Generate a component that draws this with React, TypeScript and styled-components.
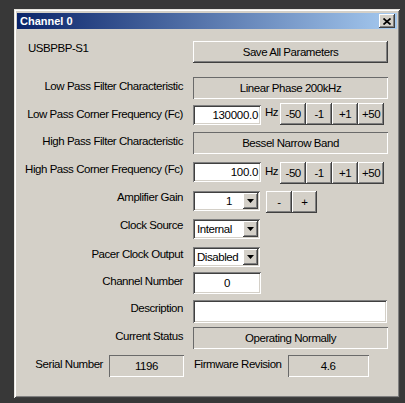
import React from "react";
import styled, { createGlobalStyle } from "styled-components";

const FACE = "#d4d0c8";

const Global = createGlobalStyle`
  html, body { margin: 0; padding: 0; background: #383838; }
  body {
    font-family: "Liberation Sans", Arial, sans-serif;
    font-size: 11.5px;
    letter-spacing: -0.45px;
    color: #000;
  }
  * { box-sizing: border-box; }
`;

const Window = styled.div`
  margin: 9px 0 0 14px;
  width: 386px;
  height: 389px;
  background: ${FACE};
  padding: 4px 3px 3px 3px;
  box-shadow: inset 1px 1px #e8e6e0, inset -1px -1px #404040,
    inset 2px 2px #ffffff, inset -2px -2px #808080;
  display: flex;
  flex-direction: column;
`;

const TitleBar = styled.div`
  height: 16px;
  background: linear-gradient(to right, #0a246a, #a6caf0);
  display: flex;
  align-items: center;
  justify-content: space-between;
  padding: 0 2px 0 3px;
`;

const Title = styled.span`
  color: #fff;
  font-weight: bold;
  font-size: 11px;
  letter-spacing: 0;
`;

const CloseBtn = styled.div`
  width: 16px;
  height: 14px;
  background: ${FACE};
  box-shadow: inset -1px -1px #404040, inset 1px 1px #ffffff,
    inset -2px -2px #808080;
  display: flex;
  align-items: center;
  justify-content: center;
`;

const Body = styled.div`
  display: flex;
  flex-direction: column;
`;

const Row = styled.div<{ $h: number; $mt: number }>`
  display: flex;
  gap: 10px;
  height: ${(p) => p.$h}px;
  margin-top: ${(p) => p.$mt}px;
`;

const Label = styled.div<{ $lt?: number; $left?: boolean }>`
  width: 166px;
  flex: none;
  text-align: ${(p) => (p.$left ? "left" : "right")};
  padding-left: ${(p) => (p.$left ? 11 : 0)}px;
  padding-top: ${(p) => p.$lt ?? 0}px;
  line-height: 13px;
  white-space: nowrap;
`;

const Controls = styled.div`
  display: flex;
  align-items: flex-start;
`;

const PushButton = styled.div<{ $w: number; $h?: number; $ml?: number }>`
  width: ${(p) => p.$w}px;
  height: ${(p) => p.$h ?? 22}px;
  margin-left: ${(p) => p.$ml ?? 0}px;
  flex: none;
  background: ${FACE};
  box-shadow: inset -1px -1px #404040, inset 1px 1px #ffffff,
    inset -2px -2px #808080;
  display: flex;
  align-items: center;
  justify-content: center;
  line-height: 13px;
  white-space: nowrap;
`;

const StaticField = styled.div<{ $w: number }>`
  width: ${(p) => p.$w}px;
  height: 22px;
  flex: none;
  background: ${FACE};
  box-shadow: inset 1px 1px #6a6a6a, inset -1px -1px #ffffff;
  display: flex;
  align-items: center;
  justify-content: center;
  line-height: 13px;
`;

const Edit = styled.div<{ $w: number; $h: number; $mt?: number; $align?: string }>`
  width: ${(p) => p.$w}px;
  height: ${(p) => p.$h}px;
  margin-top: ${(p) => p.$mt ?? 0}px;
  flex: none;
  background: #fff;
  box-shadow: inset 1px 1px #808080, inset -1px -1px #ffffff,
    inset 2px 2px #404040, inset -2px -2px ${FACE};
  display: flex;
  align-items: center;
  justify-content: ${(p) => p.$align ?? "flex-end"};
  padding: 0 3px;
  line-height: 13px;
  letter-spacing: -0.3px;
`;

const Combo = styled.div`
  width: 67px;
  height: 20px;
  flex: none;
  background: #fff;
  box-shadow: inset 1px 1px #808080, inset -1px -1px #ffffff,
    inset 2px 2px #404040, inset -2px -2px ${FACE};
  display: flex;
  align-items: center;
  padding: 2px;
`;

const ComboText = styled.div<{ $right?: boolean }>`
  flex: 1;
  text-align: ${(p) => (p.$right ? "right" : "left")};
  padding: ${(p) => (p.$right ? "0 11px 0 0" : "0 0 0 2px")};
  line-height: 16px;
  white-space: nowrap;
`;

const DropBtn = styled.div`
  width: 15px;
  height: 16px;
  flex: none;
  background: ${FACE};
  box-shadow: inset -1px -1px #404040, inset 1px 1px #ffffff,
    inset -2px -2px #808080;
  display: flex;
  align-items: center;
  justify-content: center;
`;

const Unit = styled.span`
  margin: 0 2px 0 4px;
  padding-top: 3px;
  line-height: 13px;
`;

const SmallLabel = styled.div<{ $mr: number }>`
  margin-right: ${(p) => p.$mr}px;
  padding-top: 3px;
  line-height: 13px;
  white-space: nowrap;
`;

const InfoGroup = styled.div<{ $w?: number; $end?: boolean }>`
  display: flex;
  align-items: flex-start;
  justify-content: ${(p) => (p.$end ? "flex-end" : "flex-start")};
  width: ${(p) => (p.$w ? `${p.$w}px` : "auto")};
  flex: none;
`;

const Arrow = () => (
  <svg width="7" height="4" viewBox="0 0 7 4">
    <path d="M0 0h7L3.5 4z" fill="#000" />
  </svg>
);

const ComboBox = ({ value, right }: { value: string; right?: boolean }) => (
  <Combo>
    <ComboText $right={right}>{value}</ComboText>
    <DropBtn>
      <Arrow />
    </DropBtn>
  </Combo>
);

const Steppers = () => (
  <>
    {["-50", "-1", "+1", "+50"].map((s) => (
      <PushButton key={s} $w={26}>
        {s}
      </PushButton>
    ))}
  </>
);

export default function App() {
  return (
    <>
      <Global />
      <Window>
        <TitleBar>
          <Title>Channel 0</Title>
          <CloseBtn>
            <svg width="8" height="7" viewBox="0 0 8 7">
              <path d="M0.5 0.5L7.5 6.5M7.5 0.5L0.5 6.5" stroke="#000" strokeWidth="1.7" />
            </svg>
          </CloseBtn>
        </TitleBar>
        <Body>
          <Row $h={22} $mt={12}>
            <Label $left $lt={1}>USBPBP-S1</Label>
            <PushButton $w={195}>Save All Parameters</PushButton>
          </Row>
          <Row $h={22} $mt={14}>
            <Label $lt={3}>Low Pass Filter Characteristic</Label>
            <StaticField $w={195}>Linear Phase 200kHz</StaticField>
          </Row>
          <Row $h={22} $mt={4}>
            <Label $lt={5}>Low Pass Corner Frequency (Fc)</Label>
            <Controls>
              <Edit $w={68} $h={20} $mt={2}>130000.0</Edit>
              <Unit>Hz</Unit>
              <Steppers />
            </Controls>
          </Row>
          <Row $h={22} $mt={7}>
            <Label $lt={3}>High Pass Filter Characteristic</Label>
            <StaticField $w={195}>Bessel Narrow Band</StaticField>
          </Row>
          <Row $h={22} $mt={8}>
            <Label $lt={1}>High Pass Corner Frequency (Fc)</Label>
            <Controls>
              <Edit $w={68} $h={20}>100.0</Edit>
              <Unit>Hz</Unit>
              <Steppers />
            </Controls>
          </Row>
          <Row $h={22} $mt={7}>
            <Label $lt={0}>Amplifier Gain</Label>
            <Controls>
              <ComboBox value="1" right />
              <PushButton $w={26} $ml={6}>-</PushButton>
              <PushButton $w={25}>+</PushButton>
            </Controls>
          </Row>
          <Row $h={20} $mt={6}>
            <Label $lt={0}>Clock Source</Label>
            <ComboBox value="Internal" />
          </Row>
          <Row $h={20} $mt={8}>
            <Label $lt={1}>Pacer Clock Output</Label>
            <ComboBox value="Disabled" />
          </Row>
          <Row $h={22} $mt={5}>
            <Label $lt={3}>Channel Number</Label>
            <Edit $w={68} $h={22} $align="center">0</Edit>
          </Row>
          <Row $h={23} $mt={6}>
            <Label $lt={2}>Description</Label>
            <Edit $w={194} $h={23} />
          </Row>
          <Row $h={22} $mt={4}>
            <Label $lt={3}>Current Status</Label>
            <StaticField $w={195}>Operating Normally</StaticField>
          </Row>
          <Row $h={22} $mt={6}>
            <InfoGroup $w={167} $end>
              <SmallLabel $mr={6}>Serial Number</SmallLabel>
              <StaticField $w={75}>1196</StaticField>
            </InfoGroup>
            <InfoGroup>
              <SmallLabel $mr={6}>Firmware Revision</SmallLabel>
              <StaticField $w={81}>4.6</StaticField>
            </InfoGroup>
          </Row>
        </Body>
      </Window>
    </>
  );
}
